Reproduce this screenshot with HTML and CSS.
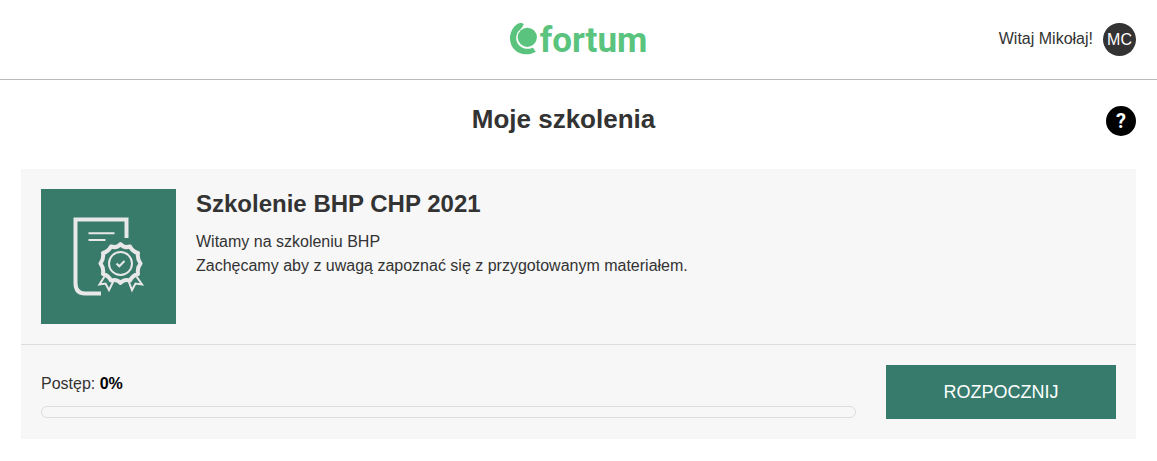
FILE: index.html
```html
<!DOCTYPE html>
<html lang="pl">
<head>
<meta charset="utf-8">
<meta name="viewport" content="width=device-width, initial-scale=1">
<title>Moje szkolenia</title>
<link rel="stylesheet" href="styles.css">
</head>
<body>
<header class="topbar">
  <a class="logo" href="#">
    <svg class="logo-mark" viewBox="0 0 30 34" aria-hidden="true">
      <path d="M12.8 1.4C11 .8 9 1 7.300 2C3 4.700 0 10.500 0 16.500C0 25.500 7 32.300 15.800 32.300C19.500 32.300 23.200 31.400 25.700 29.700L22.800 25.400C20.800 26.600 18.500 27 16.500 26.800C10.800 26.200 6.700 22 6.200 17C5.900 13 7.400 9.700 10.300 7.500C12 6 13.300 3.500 13.800 2Z"/>
      <circle cx="17.300" cy="15.300" r="9.600"/>
    </svg>
    <span class="logo-name">fortum</span>
  </a>
  <div class="user">
    <span class="greeting">Witaj Mikołaj!</span>
    <button class="avatar" type="button">MC</button>
  </div>
</header>
<main class="page">
  <div class="page-head">
    <h1 class="page-title">Moje szkolenia</h1>
    <button class="help" type="button" aria-label="Pomoc">?</button>
  </div>
  <article class="card">
    <div class="card-body">
      <svg class="cover" viewBox="0 0 135 135" aria-hidden="true">
        <rect class="cover-bg" width="135" height="135"/>
        <path class="line-thick" d="M85.500 49V30.500H34.500V94Q34.500 104.500 44 104.500H60"/>
        <path class="line-mid" d="M47.500 44.200H73.500M47.500 51H64.500"/>
        <path class="line-fine" d="M63.500 87.500L58.500 95.500L64.500 94.500L68 101L72.500 92M95.500 87.500L101 95.500L94.500 94.500L91 101L87.500 92"/>
        <path class="badge" d="M79.500 55Q83 59.500 89 57.500Q91.500 62.500 97 64Q96 70 99.500 74.500Q96 79 97 85Q91.500 86.500 89 91.500Q83 90 79.500 94Q76 90 70 91.500Q67.500 86.500 62 85Q63 79 59.500 74.500Q63 70 62 64Q67.500 62.500 70 57.500Q76 59.500 79.500 55Z"/>
        <circle class="line-ring" cx="79.500" cy="74.500" r="11.500"/>
        <path class="line-mid" d="M75.500 74.500L78.300 77.300L83.500 72"/>
      </svg>
      <div class="card-text">
        <h2 class="card-title">Szkolenie BHP CHP 2021</h2>
        <p class="card-desc">Witamy na szkoleniu BHP<br>Zachęcamy aby z uwagą zapoznać się z przygotowanym materiałem.</p>
      </div>
    </div>
    <div class="card-foot">
      <div class="progress">
        <label class="progress-label" for="progress">Postęp: <strong>0%</strong></label>
        <progress class="progress-bar" id="progress" max="100" value="0"></progress>
      </div>
      <button class="start" type="button">ROZPOCZNIJ</button>
    </div>
  </article>
</main>
</body>
</html>
```
FILE: styles.css
```css
* { box-sizing: border-box; }
body {
  margin: 0;
  background: #fff;
  color: #333;
  font: 16px/24px "Liberation Sans", Arial, sans-serif;
}
button {
  border: 0;
  padding: 0;
  color: #fff;
  font-family: inherit;
  cursor: pointer;
}
h1, h2, p { margin: 0; }

.topbar {
  display: grid;
  grid-template-columns: 1fr auto 1fr;
  align-items: center;
  height: 80px;
  padding: 0 21px;
  border-bottom: 1px solid #bbb;
}
.logo {
  grid-column: 2;
  display: flex;
  align-items: center;
  padding-bottom: 2px;
  color: #5ac37d;
  text-decoration: none;
}
.logo-mark {
  width: 30px;
  height: 34px;
  fill: currentColor;
}
.logo-name {
  padding-top: 4px;
  font: bold 35px/36px Roboto, sans-serif;
}
.user {
  justify-self: end;
  display: flex;
  align-items: center;
  gap: 10px;
}
.greeting { padding-bottom: 2px; }
.avatar {
  width: 33px;
  height: 33px;
  border-radius: 50%;
  background: #333;
  font-size: 16px;
}

.page { padding: 0 21px 22px; }
.page-head {
  display: flex;
  align-items: flex-end;
  padding: 22px 0 33px;
}
.page-title {
  flex: 1;
  font-size: 26px;
  line-height: 34px;
  text-align: center;
}
.help {
  width: 30px;
  height: 30px;
  border-radius: 50%;
  background: #000;
  font: bold 20px/30px Roboto, sans-serif;
}

.card { background: #f7f7f7; }
.card-body {
  display: flex;
  gap: 20px;
  padding: 20px;
  border-bottom: 1px solid #ddd;
}
.cover {
  flex: none;
  width: 135px;
  height: 135px;
  fill: none;
  stroke: #e8e8e8;
}
.cover-bg { fill: #397b6a; stroke: none; }
.line-thick { stroke-width: 4; }
.line-mid { stroke-width: 2; }
.line-fine { stroke-width: 2; }
.line-ring { stroke-width: 2; }
.badge { stroke-width: 4; stroke-linejoin: round; }
.card-title {
  margin-bottom: 11px;
  font-size: 24px;
  line-height: 30px;
}
.card-foot {
  display: flex;
  align-items: flex-end;
  gap: 30px;
  padding: 20px;
}
.progress { flex: 1; }
.progress-label {
  display: block;
  margin-bottom: 10px;
}
.progress-label strong { color: #000; }
.progress-bar {
  display: block;
  appearance: none;
  width: 100%;
  height: 12px;
  margin-bottom: 1px;
  border: 1px solid #ddd;
  border-radius: 6px;
  background: transparent;
  overflow: hidden;
}
.progress-bar::-webkit-progress-bar { background: transparent; }
.progress-bar::-webkit-progress-value { background: #367b6c; }
.start {
  width: 230px;
  height: 54px;
  background: #367b6c;
  font-size: 18px;
}
```
